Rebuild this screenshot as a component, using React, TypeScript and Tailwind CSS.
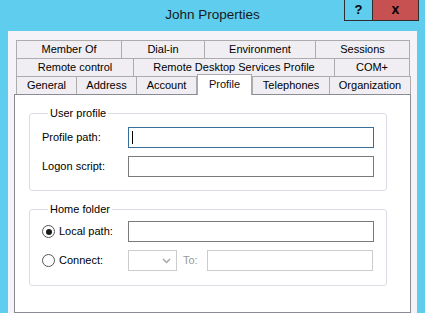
import type { ReactNode } from 'react';

type Tab = { label: string; w: number; active?: boolean };

const tabRows: Tab[][] = [
  [
    { label: 'Member Of', w: 106 },
    { label: 'Dial-in', w: 84 },
    { label: 'Environment', w: 112 },
    { label: 'Sessions', w: 95 },
  ],
  [
    { label: 'Remote control', w: 118 },
    { label: 'Remote Desktop Services Profile', w: 202 },
    { label: 'COM+', w: 76 },
  ],
  [
    { label: 'General', w: 61 },
    { label: 'Address', w: 61 },
    { label: 'Account', w: 61 },
    { label: 'Profile', w: 55, active: true },
    { label: 'Telephones', w: 78 },
    { label: 'Organization', w: 82 },
  ],
];

const TabRow = ({ tabs }: { tabs: Tab[] }) => (
  <div className="-mt-px flex items-start first:mt-0">
    {tabs.map((tab, i) =>
      tab.active ? (
        <div
          key={tab.label}
          style={{ width: tab.w }}
          className="relative z-10 -mt-[2px] flex h-[21px] shrink-0 items-center justify-center border-x border-t border-[#a9a9a9] bg-white pb-[1px] text-[#111]"
        >
          {tab.label}
        </div>
      ) : (
        <div
          key={tab.label}
          style={{ width: tab.w }}
          className={`flex h-[19px] shrink-0 items-center justify-center border border-[#acacac] bg-[#f0eef2] ${
            i > 0 && !tabs[i - 1].active ? '-ml-px' : ''
          }`}
        >
          {tab.label}
        </div>
      ),
    )}
  </div>
);

const GroupBox = ({ title, className, children }: { title: string; className?: string; children: ReactNode }) => (
  <fieldset className={`w-[358px] rounded-[3px] border border-[#dadee4] px-[12px] ${className ?? ''}`}>
    <legend className="ml-[6px] px-[2px] leading-[13px]">{title}</legend>
    {children}
  </fieldset>
);

const Radio = ({ checked }: { checked?: boolean }) => (
  <span className="flex h-[13px] w-[13px] shrink-0 items-center justify-center rounded-full border border-[#555] bg-white">
    {checked && <span className="h-[6px] w-[6px] rounded-full bg-[#1a1a1a]" />}
  </span>
);

export default function App() {
  return (
    <div className="flex h-[313px] w-[425px] flex-col overflow-hidden bg-[#5ecdee] font-['Liberation_Sans',Arial,sans-serif] text-[11px] text-black">
      <div className="grid h-[31px] shrink-0 grid-cols-[1fr_auto_1fr]">
        <div />
        <div className="flex items-center pb-[1px] text-[13.5px] text-[#1a1a1a]">John Properties</div>
        <div className="flex justify-end self-start pr-[6px]">
          <div className="flex h-[21px] w-[29px] items-center justify-center border-x border-b border-[#2e2e2e] text-[13px] font-bold">
            ?
          </div>
          <div className="flex h-[21px] w-[46px] items-center justify-center border-r border-b border-[#2e2e2e] bg-[#c75050] pb-[2px] text-[14px] font-bold">
            x
          </div>
        </div>
      </div>

      <div className="mx-[8px] flex flex-1 flex-col bg-[#f5f3f7] px-[6px] pt-[9px]">
        <div className="ml-[2px] w-[394px]">
          {tabRows.map((row, i) => (
            <TabRow key={i} tabs={row} />
          ))}
        </div>

        <div className="-mt-px flex flex-1 flex-col border border-[#898c95] bg-white pl-[14px] pt-[12px]">
          <GroupBox title="User profile" className="pt-[7px] pb-[13px]">
            <div className="flex h-[21px] items-center">
              <span className="w-[86px]">Profile path:</span>
              <div className="flex h-[21px] w-[246px] items-center border border-[#3b6d96] bg-white pl-[3px]">
                <span className="h-[13px] w-px bg-black" />
              </div>
            </div>
            <div className="mt-[8px] flex h-[21px] items-center">
              <span className="w-[86px]">Logon script:</span>
              <div className="h-[21px] w-[246px] border border-[#7a7a7a] bg-white" />
            </div>
          </GroupBox>

          <GroupBox title="Home folder" className="mt-[12px] pt-[5px] pb-[14px]">
            <div className="flex h-[21px] items-center">
              <div className="flex w-[86px] items-center gap-[4px]">
                <Radio checked />
                <span>Local path:</span>
              </div>
              <div className="h-[21px] w-[246px] border border-[#7a7a7a] bg-white" />
            </div>
            <div className="mt-[8px] flex h-[21px] items-center">
              <div className="flex w-[86px] items-center gap-[4px]">
                <Radio />
                <span>Connect:</span>
              </div>
              <div className="flex h-[21px] w-[49px] items-center justify-end border border-[#cccccc] bg-white pr-[5px]">
                <svg width="9" height="6" viewBox="0 0 9 6" fill="none">
                  <path d="M1 1l3.5 3.5L8 1" stroke="#a6a6a6" strokeWidth="1.5" />
                </svg>
              </div>
              <span className="ml-[6px] w-[24px] text-[#9a9a9a]">To:</span>
              <div className="h-[21px] w-[166px] border border-[#cccccc] bg-white" />
            </div>
          </GroupBox>
        </div>
      </div>
    </div>
  );
}
